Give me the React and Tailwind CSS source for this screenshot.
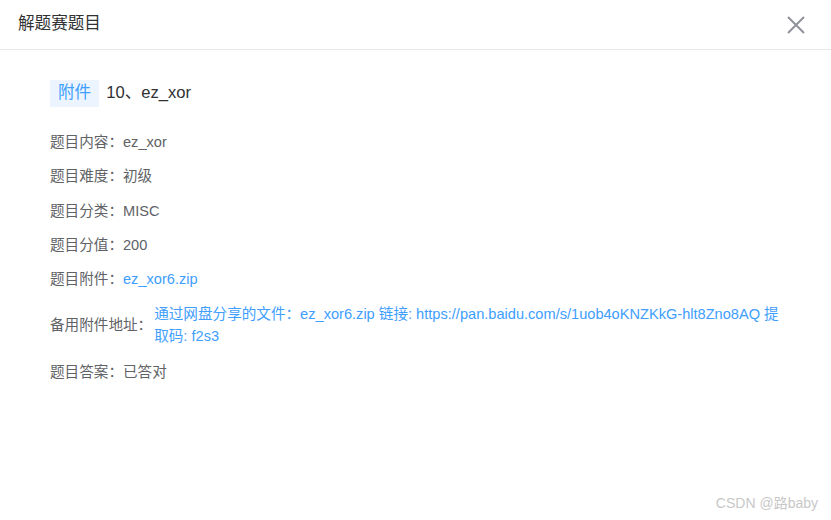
import React from "react";

const rows = [
  { label: "题目内容：", value: "ez_xor" },
  { label: "题目难度：", value: "初级" },
  { label: "题目分类：", value: "MISC" },
  { label: "题目分值：", value: "200" },
  { label: "题目附件：", value: "ez_xor6.zip", link: true },
];

const CloseIcon = () => (
  <svg width="20" height="20" viewBox="0 0 20 20" className="text-[#909399]">
    <path d="M2 2 L18 18 M18 2 L2 18" stroke="currentColor" strokeWidth="2" fill="none" />
  </svg>
);

const App = () => {
  return (
    <div
      className="relative h-[520px] w-[831px] bg-white"
      style={{ fontFamily: '"Liberation Sans", Arial, "Noto Sans CJK SC", sans-serif' }}
    >
      <div className="flex h-[50px] items-center justify-between border-b border-[#e8e8e8] pl-[18px] pr-[25px]">
        <span className="text-[16.6px] text-[#303133]">解题赛题目</span>
        <CloseIcon />
      </div>

      <div className="pl-[50px] pr-[45px] pt-[30px]">
        <div className="flex items-center">
          <span className="flex h-[27px] items-center bg-[#ecf5ff] px-[8px] text-[16.6px] text-[#409eff]">
            附件
          </span>
          <span className="ml-[7px] text-[16.6px] text-[#303133]">10、ez_xor</span>
        </div>

        <div className="mt-[25px] flex flex-col gap-[14.3px] text-[14.6px] text-[#606266]">
          {rows.map((row) => (
            <div key={row.label} className="flex leading-[20px]">
              <span>{row.label}</span>
              <span className={row.link ? "text-[#409eff]" : ""}>{row.value}</span>
            </div>
          ))}

          <div className="flex items-center">
            <span className="shrink-0 leading-[20px]">备用附件地址：</span>
            <span className="ml-[2px] leading-[22px] text-[#409eff]">
              通过网盘分享的文件：ez_xor6.zip 链接: https://pan.baidu.com/s/1uob4oKNZKkG-hlt8Zno8AQ 提取码: f2s3
            </span>
          </div>

          <div className="flex leading-[20px]">
            <span>题目答案：</span>
            <span>已答对</span>
          </div>
        </div>
      </div>

      <div className="absolute bottom-[6px] right-[13px] text-[14px] text-[#c8c8c8]">CSDN @路baby</div>
    </div>
  );
};

export default App;
